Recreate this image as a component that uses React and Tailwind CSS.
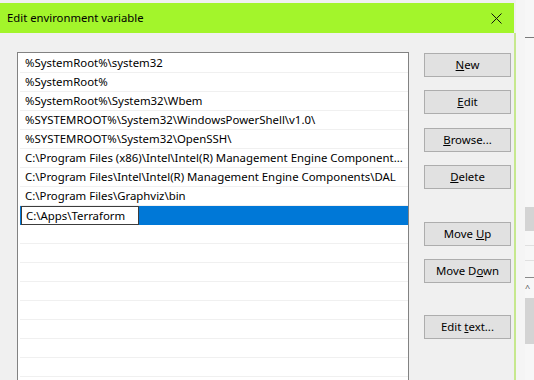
import React from 'react';

const paths = [
  '%SystemRoot%\\system32',
  '%SystemRoot%',
  '%SystemRoot%\\System32\\Wbem',
  '%SYSTEMROOT%\\System32\\WindowsPowerShell\\v1.0\\',
  '%SYSTEMROOT%\\System32\\OpenSSH\\',
  'C:\\Program Files (x86)\\Intel\\Intel(R) Management Engine Component...',
  'C:\\Program Files\\Intel\\Intel(R) Management Engine Components\\DAL',
  'C:\\Program Files\\Graphviz\\bin',
];

const Btn = ({ className, children }) => (
  <div className={`w-[87px] h-[24px] flex items-center justify-center bg-[#e1e1e1] border border-[#adadad] text-black ${className}`}>
    {children}
  </div>
);

const App = () => {
  return (
    <div
      className="w-[534px] h-[380px] flex overflow-hidden bg-[#f0f0f0] text-[11.4px] text-black"
      style={{ fontFamily: '"Segoe UI", "Noto Sans", sans-serif' }}
    >
      {/* dialog */}
      <div className="w-[516px] shrink-0 flex flex-col pt-[3px]">
        {/* title bar */}
        <div className="h-[30px] shrink-0 flex items-center justify-between bg-[#a3f52b] pl-[7px] pr-[12px] mr-[2px]">
          <span className="text-[11.3px]">Edit environment variable</span>
          <svg width="11" height="11" viewBox="0 0 11 11">
            <path d="M0.5 0.5 L10.5 10.5 M10.5 0.5 L0.5 10.5" stroke="#111" strokeWidth="1" fill="none" />
          </svg>
        </div>

        {/* body */}
        <div className="flex-1 flex border-r-2 border-[#c6e88e] bg-[#f0f0f0] pl-[17px]">
          {/* list */}
          <div className="w-[392px] mt-[19px] border border-[#828282] border-b-0 bg-white pl-[2px] pt-[1px]">
            {paths.map((p) => (
              <div key={p} className="h-[19px] flex items-center border-b border-[#f0f0f0] pl-[5px] whitespace-nowrap overflow-hidden">
                {p}
              </div>
            ))}
            <div className="h-[19px] flex pl-[1px] bg-[#0078d7]">
              <div className="w-[118px] h-[19px] bg-white border border-[#3c3c3c] flex items-center pl-[4px]">
                C:\Apps\Terraform
              </div>
            </div>
            {Array.from({ length: 8 }).map((_, i) => (
              <div key={i} className="h-[19px] border-b border-[#f0f0f0]" />
            ))}
          </div>

          {/* buttons */}
          <div className="ml-[15px] mt-[20px] flex flex-col">
            <Btn><span><u>N</u>ew</span></Btn>
            <Btn className="mt-[13px]"><span><u>E</u>dit</span></Btn>
            <Btn className="mt-[14px]"><span><u>B</u>rowse...</span></Btn>
            <Btn className="mt-[13px]"><span><u>D</u>elete</span></Btn>
            <Btn className="mt-[33px]"><span>Move <u>U</u>p</span></Btn>
            <Btn className="mt-[13px]"><span>Move D<u>o</u>wn</span></Btn>
            <Btn className="mt-[32px]"><span>Edit <u>t</u>ext...</span></Btn>
          </div>
        </div>
      </div>

      {/* window behind */}
      <div className="flex-1 flex">
        <div className="w-[9px] bg-[#f5f5f5]" />
        <div className="flex-1 flex flex-col bg-[#f7f7f7]">
          <div className="h-[38px] border-b border-[#7a7a7a]" />
          <div className="h-[169px]" />
          <div className="h-[24px] bg-[#d4d4d4]" />
          <div className="h-[15px] border-b border-[#e0e0e0]" />
          <div className="h-[15px] border-b border-[#e0e0e0]" />
          <div className="h-[17px] border-b border-[#8a8a8a]" />
          <div className="h-[20px] text-[9px] leading-[20px] text-[#555]">^</div>
          <div className="h-[46px] bg-[#d4d4d4]" />
        </div>
      </div>
    </div>
  );
};

export default App;
